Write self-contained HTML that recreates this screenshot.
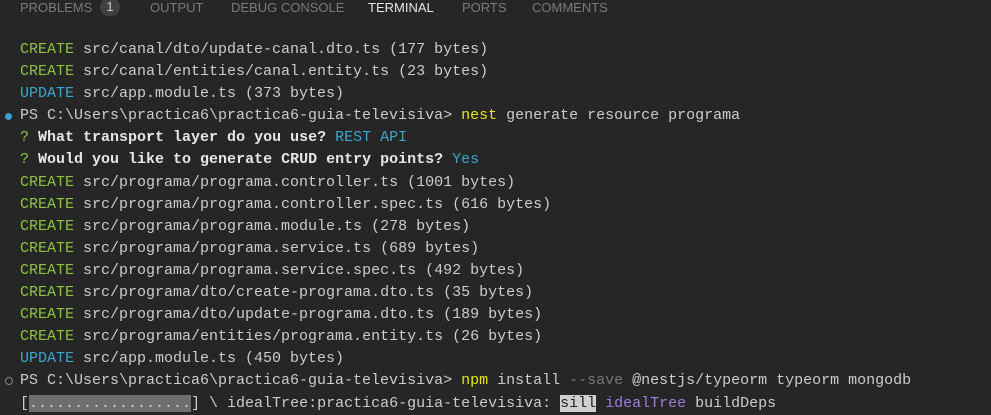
<!DOCTYPE html>
<html><head><style>
body{margin:0;width:991px;height:408px;background:#262626;overflow:hidden;position:relative;font-family:"Liberation Mono",monospace}
.tabs{position:absolute;top:0;left:0;height:20px;font-family:"Liberation Sans",sans-serif;font-size:13px;color:#7a7a7a}
.tabs span{position:absolute;top:0;white-space:nowrap;line-height:16px}
.badge{background:#404040;color:#ccc;border-radius:10px;width:20px;height:18px;text-align:center;top:-2px!important;line-height:18px!important}
.term{position:absolute;left:20px;top:39px;font-size:15px;line-height:22.1px;color:#cccccc;white-space:pre}
.g{color:#8cc43f}.c{color:#3aa6cf}.y{color:#e5e510}.b{font-weight:bold;color:#e6e6e6}.d{color:#777}
.p{color:#a07cdc}.hl{background:#d0d0d0;color:#222}.bar{background:#6e6e6e}
.dot{position:absolute;left:5px;width:7px;height:7px;border-radius:50%}
</style></head><body>
<div class="tabs">
<span style="left:20px">PROBLEMS</span>
<span class="badge" style="left:100px">1</span>
<span style="left:150px">OUTPUT</span>
<span style="left:231px">DEBUG CONSOLE</span>
<span style="left:368px;color:#e7e7e7">TERMINAL</span>
<span style="left:462px">PORTS</span>
<span style="left:532px">COMMENTS</span>
</div>
<div class="dot" style="top:113px;background:#3a9fd1"></div>
<div class="dot" style="top:377px;border:1px solid #888;width:6px;height:6px"></div>
<div class="term"><span class="g">CREATE</span> src/canal/dto/update-canal.dto.ts (177 bytes)
<span class="g">CREATE</span> src/canal/entities/canal.entity.ts (23 bytes)
<span class="c">UPDATE</span> src/app.module.ts (373 bytes)
PS C:\Users\practica6\practica6-guia-televisiva&gt; <span class="y">nest</span> generate resource programa
<span class="g">?</span> <span class="b">What transport layer do you use?</span> <span class="c">REST API</span>
<span class="g">?</span> <span class="b">Would you like to generate CRUD entry points?</span> <span class="c">Yes</span>
<span class="g">CREATE</span> src/programa/programa.controller.ts (1001 bytes)
<span class="g">CREATE</span> src/programa/programa.controller.spec.ts (616 bytes)
<span class="g">CREATE</span> src/programa/programa.module.ts (278 bytes)
<span class="g">CREATE</span> src/programa/programa.service.ts (689 bytes)
<span class="g">CREATE</span> src/programa/programa.service.spec.ts (492 bytes)
<span class="g">CREATE</span> src/programa/dto/create-programa.dto.ts (35 bytes)
<span class="g">CREATE</span> src/programa/dto/update-programa.dto.ts (189 bytes)
<span class="g">CREATE</span> src/programa/entities/programa.entity.ts (26 bytes)
<span class="c">UPDATE</span> src/app.module.ts (450 bytes)
PS C:\Users\practica6\practica6-guia-televisiva&gt; <span class="y">npm</span> install <span class="d">--save</span> @nestjs/typeorm typeorm mongodb
[<span class="bar">..................</span>] \ idealTree:practica6-guia-televisiva: <span class="hl">sill</span> <span class="p">idealTree</span> buildDeps</div>
</body></html>
